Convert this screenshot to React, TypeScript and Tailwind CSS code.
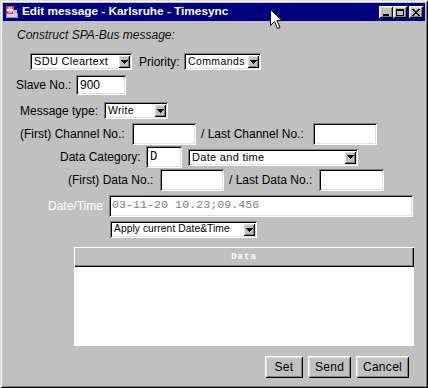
import React from "react";

const sans = "font-['Liberation_Sans',Arial,sans-serif]";
const mono = "font-['Liberation_Mono','Courier_New',monospace]";

const sunken =
  "bg-white shadow-[inset_1px_1px_#808080,inset_-1px_-1px_#ffffff,inset_2px_2px_#000000,inset_-2px_-2px_#dfdfdf]";
const raised =
  "bg-[#c0c0c0] shadow-[inset_1px_1px_#ffffff,inset_-1px_-1px_#000000,inset_2px_2px_#dfdfdf,inset_-2px_-2px_#808080]";

const Arrow = () => (
  <svg width="7" height="4" viewBox="0 0 7 4" shapeRendering="crispEdges">
    <path d="M0 0h7v1H0zM1 1h5v1H1zM2 2h3v1H2zM3 3h1v1H3z" fill="#000" />
  </svg>
);

type ComboProps = { value: string; w: string; textCls?: string };

const Combo = ({ value, w, textCls = "text-[11px] tracking-[0.3px]" }: ComboProps) => (
  <div className={`${w} h-[17px] shrink-0 ${sunken} flex items-center p-[2px]`}>
    <span className={`flex-1 pl-[2px] whitespace-nowrap overflow-hidden text-black leading-none ${textCls}`}>
      {value}
    </span>
    <span className={`w-[12px] h-[13px] ${raised} flex items-center justify-center`}>
      <Arrow />
    </span>
  </div>
);

type FieldProps = { w: string; children?: React.ReactNode; h?: string };

const Field = ({ w, children, h = "h-[22px]" }: FieldProps) => (
  <div className={`${w} ${h} shrink-0 ${sunken} flex items-center px-[4px] text-[12px] leading-none`}>
    {children}
  </div>
);

const Label = ({ w, children, cls = "text-black" }: { w: string; children: React.ReactNode; cls?: string }) => (
  <span className={`${w} shrink-0 whitespace-nowrap text-[12px] leading-none ${cls}`}>{children}</span>
);

const Button = ({ w, children }: { w: string; children: React.ReactNode }) => (
  <div className={`${w} h-[22px] ${raised} flex items-center justify-center text-[12px] text-black tracking-[0.3px]`}>
    {children}
  </div>
);

const TitleButton = ({ children, cls = "" }: { children: React.ReactNode; cls?: string }) => (
  <div className={`w-[14px] h-[12px] ${raised} flex items-center justify-center ${cls}`}>{children}</div>
);

const AppIcon = () => (
  <svg width="16" height="16" viewBox="0 0 16 16" shapeRendering="crispEdges">
    <rect x="2" y="9" width="12" height="5" fill="#9090c0" />
    <rect x="3" y="10" width="10" height="3" fill="#d0d0e8" />
    <rect x="2" y="2" width="8" height="8" fill="#e04060" />
    <rect x="4" y="3" width="4" height="6" fill="#f4a0b0" />
    <rect x="3" y="5" width="6" height="2" fill="#ffffff" />
    <rect x="9" y="6" width="4" height="4" fill="#c0c0d8" />
  </svg>
);

const Cursor = () => (
  <svg width="13" height="21" viewBox="0 0 13 21" className="absolute left-[270px] top-[9px]">
    <path
      d="M0.5 0.5 L0.5 16.5 L4.5 12.5 L7.5 19.5 L10 18.5 L7 11.5 L12 11.5 Z"
      fill="#fff"
      stroke="#000"
      strokeWidth="1"
      strokeLinejoin="miter"
    />
  </svg>
);

export default function App() {
  return (
    <div
      className={`relative w-[428px] h-[388px] bg-[#c0c0c0] p-[3px] ${sans} shadow-[inset_1px_1px_#dfdfdf,inset_-1px_-1px_#000000,inset_2px_2px_#ffffff,inset_-2px_-2px_#808080]`}
    >
      {/* title bar */}
      <div className="h-[18px] bg-[#000080] flex items-center pl-[1px]">
        <AppIcon />
        <span className="ml-[2px] text-white font-bold text-[11.8px] leading-none whitespace-nowrap">
          Edit message - Karlsruhe - Timesync
        </span>
        <div className="ml-auto flex items-center mr-[2px]">
          <TitleButton>
            <span className="block w-[6px] h-[2px] bg-black mt-[5px]" />
          </TitleButton>
          <TitleButton>
            <span className="block w-[8px] h-[7px] border border-black border-t-2" />
          </TitleButton>
          <TitleButton cls="ml-[2px]">
            <svg width="8" height="7" viewBox="0 0 8 7" shapeRendering="crispEdges">
              <path
                d="M0 0h2v1H0zM6 0h2v1H6zM1 1h2v1H1zM5 1h2v1H5zM2 2h4v1H2zM3 3h2v1H3zM2 4h4v1H2zM1 5h2v1H1zM5 5h2v1H5zM0 6h2v1H0zM6 6h2v1H6z"
                fill="#000"
              />
            </svg>
          </TitleButton>
        </div>
      </div>

      {/* body */}
      <div className="flex flex-col">
        <div className="mt-[7px] ml-[14px] h-[14px] flex items-center">
          <span className="italic text-[12px] text-[#101010] leading-none">Construct SPA-Bus message:</span>
        </div>

        <div className="mt-[11px] ml-[27px] h-[17px] flex items-center">
          <Combo value="SDU Cleartext" w="w-[102px]" />
          <Label w="w-[45px] ml-[7px]">Priority:</Label>
          <Combo value="Commands" w="w-[77px]" textCls="text-[10.5px] tracking-[0.4px]" />
        </div>

        <div className="mt-[5px] ml-[13px] h-[20px] flex items-center">
          <Label w="w-[60px]">Slave No.:</Label>
          <Field w="w-[50px]" h="h-[20px]">
            <span className="text-black">900</span>
          </Field>
        </div>

        <div className="mt-[7px] ml-[17px] h-[17px] flex items-center">
          <Label w="w-[84px]">Message type:</Label>
          <Combo value="Write" w="w-[64px]" textCls="text-[10.5px] tracking-[0.3px]" />
        </div>

        <div className="mt-[4px] ml-[17px] h-[22px] flex items-center">
          <Label w="w-[112px]">(First) Channel No.:</Label>
          <Field w="w-[64px]" />
          <Label w="w-[112px] ml-[5px]">/ Last Channel No.:</Label>
          <Field w="w-[64px]" />
        </div>

        <div className="mt-[1px] ml-[57px] h-[22px] flex items-center">
          <Label w="w-[86px]">Data Category:</Label>
          <Field w="w-[36px]">
            <span className={`${mono} text-[12px] text-black`}>D</span>
          </Field>
          <div className="ml-[6px]">
            <Combo value="Date and time" w="w-[170px]" />
          </div>
        </div>

        <div className="mt-[1px] ml-[65px] h-[22px] flex items-center">
          <Label w="w-[92px]">(First) Data No.:</Label>
          <Field w="w-[64px]" />
          <Label w="w-[90px] ml-[5px]">/ Last Data No.:</Label>
          <Field w="w-[65px]" />
        </div>

        <div className="mt-[4px] ml-[45px] h-[22px] flex items-center">
          <Label w="w-[61px]" cls="text-white">
            Date/Time
          </Label>
          <Field w="w-[304px]">
            <span className={`${mono} text-[11.7px] text-[#808080] -ml-[1px]`}>03-11-20 10.23;09.456</span>
          </Field>
        </div>

        <div className="mt-[4px] ml-[107px] h-[17px] flex items-center">
          <Combo value="Apply current Date&Time" w="w-[147px]" textCls="text-[10.2px] tracking-[0.1px]" />
        </div>

        <div className="mt-[9px] ml-[71px] w-[340px] flex flex-col">
          <div className="h-[20px] bg-[#c0c0c0] shadow-[inset_1px_1px_#ffffff,inset_-1px_-1px_#000000,inset_-2px_-2px_#808080] flex items-center justify-center">
            <span className={`${mono} text-[9px] font-bold text-white tracking-[1px] leading-none`}>Data</span>
          </div>
          <div className="h-[79px] bg-white" />
        </div>

        <div className="mt-[10px] ml-[262px] flex gap-[5px]">
          <Button w="w-[38px]">Set</Button>
          <Button w="w-[43px]">Send</Button>
          <Button w="w-[53px]">Cancel</Button>
        </div>
      </div>

      <Cursor />
    </div>
  );
}
